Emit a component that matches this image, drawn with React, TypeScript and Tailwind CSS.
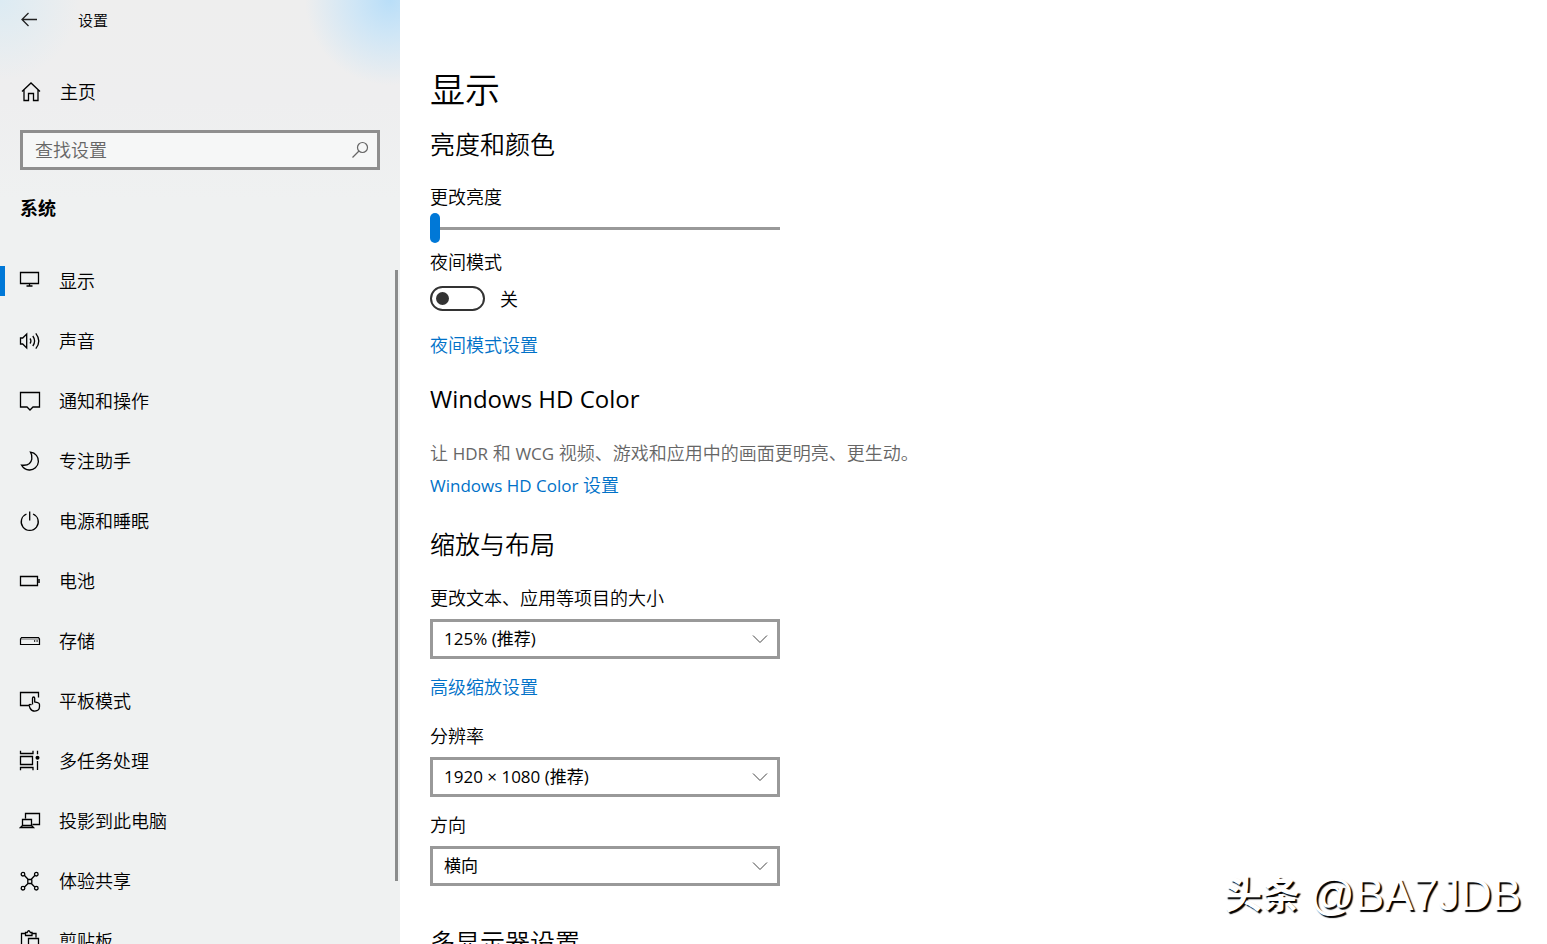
import type { ReactNode } from "react";

const svgProps = {
  width: 22,
  height: 22,
  viewBox: "0 0 22 22",
  fill: "none",
  stroke: "currentColor",
  strokeWidth: 1.3,
  "aria-hidden": true,
} as const;

function Icon({ children }: { children: ReactNode }) {
  return <svg {...svgProps} className="shrink-0">{children}</svg>;
}

const navItems: { label: string; icon: ReactNode }[] = [
  {
    label: "显示",
    icon: <path d="M1.500 2.500h18v11h-18zM10.500 13.500v2.500M7.500 16h6" />,
  },
  {
    label: "声音",
    icon: <path d="M1.500 8h2.200l4-4v14l-4-4H1.500zM11 8.500q1.800 2.500 0 5M13.800 6q3.600 5 0 10M16.800 3.300q6 7.700 0 15.400" />,
  },
  {
    label: "通知和操作",
    icon: <path d="M1.500 2.500h19v14.500h-6.500l-3 3-3-3h-6.500z" />,
  },
  {
    label: "专注助手",
    icon: <path d="M11.500 2.200c5 .6 8.200 4.700 7.900 9.500-.4 5-4.500 8.600-9.200 8.300-3.200-.2-6-2-7.600-4.900 5.500.7 9.400-1.600 10.200-6 .4-2.600 0-4.900-1.300-6.900z" />,
  },
  {
    label: "电源和睡眠",
    icon: <path d="M7.500 4a8.500 8.500 0 1 0 6.500 0M10.700 1.500v9" />,
  },
  {
    label: "电池",
    icon: <><path d="M1.500 6.500h17v9h-17z" /><path d="M20 9v4" strokeWidth="1.500" /></>,
  },
  {
    label: "存储",
    icon: <><path d="M1.500 9l1-1.500h17l1 1.500v5.500h-19z" strokeWidth="1.200" /><path d="M1.500 9h19" strokeWidth=".6" /><path d="M15 11h1.200M17.500 11h1.200" /></>,
  },
  {
    label: "平板模式",
    icon: <path d="M9.500 15.500h-8v-13h18V7.500M13.500 14.500V8.300q0-1.300 1.100-1.300t1.100 1.300v3.700l3 .6q1.800.4 1.800 2v2q0 4.500-4.700 4.500-3.300 0-4.800-3l-1-3q.8-1.500 2.500 0" />,
  },
  {
    label: "多任务处理",
    icon: <><path d="M1.500 6.500h12v8h-12zM1.500 .800v2.700h12.500V.8M1.500 20.200v-2.700h12.500v2.700M18.500 .800v3.500M18.500 11v9" /><circle cx="18.500" cy="7.700" r="2" fill="currentColor" stroke="none" /></>,
  },
  {
    label: "投影到此电脑",
    icon: <path d="M6.500 8.500V3.500h14v11h-7M3.500 9.500h9v6h-9zM3.500 15.500l-2 2h13l-2-2" />,
  },
  {
    label: "体验共享",
    icon: <><path d="M5.300 5.300l3.700 4M16 5.300l-3.700 4M5.300 17.300l3.700-3.800M16 17.300l-3.700-3.800M8.800 9.500h4v4h-4z" /><circle cx="4" cy="4.200" r="1.800" /><circle cx="17.300" cy="4.200" r="1.800" /><circle cx="4" cy="18.200" r="1.800" /><circle cx="17.300" cy="18.200" r="1.800" /></>,
  },
  {
    label: "剪贴板",
    icon: <path d="M8 19.500H2.500V3.500h4M13 3.500h4v4M6.500 5.500v-3h1.700q1.500-3.500 3.100 0H13v3zM9.500 8.500h10v12h-10z" />,
  },
];

function Latin({ children }: { children: ReactNode }) {
  return <span className="text-[17px] leading-5 font-normal">{children}</span>;
}

function Select({ id, label, value }: { id: string; label: string; value: string }) {
  return (
    <div className="flex flex-col gap-[9px]">
      <label htmlFor={id} className="leading-6">{label}</label>
      <div className="grid">
        <select
          id={id}
          className="col-start-1 row-start-1 h-10 w-full appearance-none border-3 border-[#999] bg-white px-[11px] text-[17px] leading-6 font-normal"
        >
          <option>{value}</option>
        </select>
        <svg
          width="16"
          height="10"
          viewBox="0 0 16 10"
          fill="none"
          stroke="#444"
          strokeWidth="1"
          className="pointer-events-none col-start-1 row-start-1 mr-3 self-center justify-self-end"
          aria-hidden="true"
        >
          <path d="M1 1.500l7 7 7-7" />
        </svg>
      </div>
    </div>
  );
}

const headingClass = "text-[25px] leading-8";
const linkClass = "self-start leading-6 text-[#0071c8]";

export default function App() {
  return (
    <div className="flex h-screen overflow-hidden bg-white font-['Open_Sans','Noto_Sans_CJK_SC',sans-serif] text-[18px] font-[350] text-black">
      <aside className="flex w-100 shrink-0 flex-col overflow-hidden bg-[#eff1f1] bg-[radial-gradient(circle_at_390px_0px,#b9def8_0px,#cfe6f6_35px,#cfe6f600_85px),radial-gradient(circle_at_0px_0px,#dcebf3_0px,#dcebf300_80px),linear-gradient(to_bottom,#eeeeee_0px,#eeeeef_100px,#eeeeef00_200px)]">
        <header className="flex h-10 shrink-0 items-center gap-10 pl-5 text-[15px]">
          <button type="button" aria-label="返回">
            <svg width="18" height="16" viewBox="0 0 18 16" fill="none" stroke="#222" strokeWidth="1.300" aria-hidden="true">
              <path d="M17 7.500H2M8.500 1L2 7.500l6.500 6.500" />
            </svg>
          </button>
          <span>设置</span>
        </header>
        <a href="#home" className="mt-8 flex h-10 shrink-0 items-center gap-[18px] pl-5">
          <Icon><path d="M2 10.500L11 2l9 8.500M4 9v10.500h4.500v-7h5v7H18V9" /></Icon>
          <span>主页</span>
        </a>
        <div className="mx-5 mt-[18px] flex h-10 shrink-0 items-center border-3 border-[#8f8f8f] bg-[#f6f7f7] pr-2 pl-3">
          <input
            type="text"
            aria-label="查找设置"
            placeholder="查找设置"
            className="min-w-0 flex-1 bg-transparent outline-none placeholder:text-[#666]"
          />
          <svg width="18" height="18" viewBox="0 0 18 18" fill="none" stroke="#666" strokeWidth="1.200" aria-hidden="true">
            <circle cx="11.500" cy="6.500" r="5" />
            <path d="M8 10L1.500 16.500" />
          </svg>
        </div>
        <h2 className="mt-[26px] ml-5 shrink-0 leading-6 font-bold">系统</h2>
        <div className="mt-[31px] flex min-h-0 flex-1 justify-between overflow-hidden">
          <nav className="flex flex-1 flex-col">
            {navItems.map((item, index) => (
              <a key={item.label} href={`#${item.label}`} className="flex h-15 shrink-0 items-center">
                <span className={index === 0 ? "mr-3.5 h-[30px] w-[5px] bg-[#0078d7]" : "mr-3.5 h-[30px] w-[5px]"} />
                <Icon>{item.icon}</Icon>
                <span className="ml-[18px]">{item.label}</span>
              </a>
            ))}
          </nav>
          <div className="mt-[19px] mr-0.5 mb-[63px] w-[3px] bg-[#8a8c8c]" />
        </div>
      </aside>

      <main className="flex min-w-0 flex-1 flex-col overflow-hidden pt-[66px] pl-[30px]">
        <h1 className="shrink-0 text-[35px] leading-12">显示</h1>
        <section className="mt-3.5 flex w-[350px] shrink-0 flex-col">
          <h2 className={headingClass}>亮度和颜色</h2>
          <label htmlFor="brightness" className="mt-[25px] leading-6">更改亮度</label>
          <input
            id="brightness"
            type="range"
            min={0}
            max={100}
            defaultValue={0}
            className="mt-1 h-[30px] w-full appearance-none bg-transparent [&::-webkit-slider-runnable-track]:h-[3px] [&::-webkit-slider-runnable-track]:bg-[#999] [&::-webkit-slider-thumb]:-mt-[14px] [&::-webkit-slider-thumb]:h-[30px] [&::-webkit-slider-thumb]:w-2.5 [&::-webkit-slider-thumb]:appearance-none [&::-webkit-slider-thumb]:rounded-full [&::-webkit-slider-thumb]:bg-[#0078d7]"
          />
          <span id="night-label" className="mt-[7px] leading-6">夜间模式</span>
          <div className="mt-3 flex items-center gap-[15px]">
            <button
              type="button"
              role="switch"
              aria-checked="false"
              aria-labelledby="night-label"
              className="flex h-[25px] w-[55px] items-center rounded-full border-[2px] border-[#333] pl-1"
            >
              <span className="size-[13px] rounded-full bg-[#333]" />
            </button>
            <span className="leading-6">关</span>
          </div>
          <a href="#night" className={`mt-[22px] ${linkClass}`}>夜间模式设置</a>
        </section>

        <section className="mt-[26px] flex shrink-0 flex-col">
          <h2 className="text-[24px] leading-8 font-normal">Windows HD Color</h2>
          <p className="mt-[26px] leading-6 text-[#666]">
            让 <Latin>HDR</Latin> 和 <Latin>WCG</Latin> 视频、游戏和应用中的画面更明亮、更生动。
          </p>
          <a href="#hdcolor" className={`mt-2 ${linkClass}`}>
            <Latin>Windows HD Color</Latin> 设置
          </a>
        </section>

        <section className="mt-[31px] flex w-[350px] shrink-0 flex-col">
          <h2 className={`mb-[26px] ${headingClass}`}>缩放与布局</h2>
          <Select id="scale" label="更改文本、应用等项目的大小" value="125% (推荐)" />
          <a href="#scaling" className={`mt-4 mb-[25px] ${linkClass}`}>高级缩放设置</a>
          <div className="flex flex-col gap-4">
            <Select id="resolution" label="分辨率" value="1920 × 1080 (推荐)" />
            <Select id="orientation" label="方向" value="横向" />
          </div>
        </section>

        <h2 className={`mt-10 shrink-0 ${headingClass}`}>多显示器设置</h2>
      </main>

      <div className="pointer-events-none absolute right-[26px] bottom-[22px] flex items-center gap-2.5 font-['Liberation_Sans','Noto_Sans_CJK_SC',sans-serif] leading-[54px] font-normal text-white [text-shadow:2px_2px_1px_#000]">
        <span className="text-[38px] font-bold">头条</span>
        <span className="text-[44px]">@BA7JDB</span>
      </div>
    </div>
  );
}
